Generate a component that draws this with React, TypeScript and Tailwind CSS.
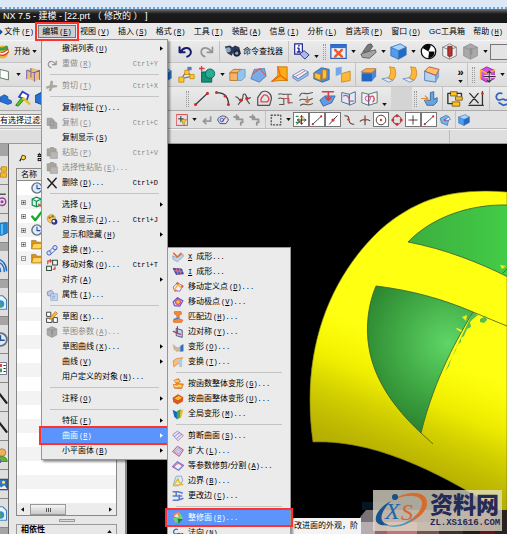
import type { ReactNode } from "react";

const line = { fill: "none", strokeLinecap: "round", strokeLinejoin: "round" } as const;

const icons: Record<string, ReactNode> = {
  logo: <><circle cx="8" cy="10" r="8" fill="#e9b62d" /><path d="M1 7c5 7 10 2 14-3l1 6c-4 6-9 6-14 3z" fill="#d43b25" /><path d="M2 3c3 5 7 4 11 1" stroke="#38a049" strokeWidth="4" {...line} /><path d="M4 11c4 3 7 1 10-2" stroke="#fff" strokeWidth="2" {...line} /></>,
  undo: <path d="M3 5v6h6M4 11C7 5 14 4 16 9c1 3-1 6-4 7" stroke="#171c6c" strokeWidth="2.4" {...line} />,
  redo: <path d="M17 5v6h-6M16 11C13 5 6 4 4 9c-1 3 1 6 4 7" stroke="#949494" strokeWidth="2" {...line} />,
  binoculars: <><path d="M1 4l6-1 3 2 3-2 5 2 2 8-6 3-3-5-2 4-5-3z" fill="#2c3850" /><circle cx="5" cy="8" r="3" fill="#8fa6c8" /><circle cx="15" cy="12" r="4" fill="#1b2232" /><circle cx="15" cy="12" r="1.9" fill="#86a4d5" /></>,
  info: <><path d="M2 1h9v12H2z" fill="#fff" stroke="#1b2390" strokeWidth="1.4" /><path d="M5.5 6h1.5v4M5 10.5h3.5M7 3v.5" stroke="#1b2390" strokeWidth="1.7" {...line} /><path d="M8 13l5-4 6 5-5 5z" fill="#aeb9ea" stroke="#1b2390" /></>,
  fit: <><path d="M1 2h18v16H1z" fill="#e7f0fc" stroke="#2c62b8" strokeWidth="1.5" /><path d="M1 2h18v4H1z" fill="#2e6fd0" /><path d="M6 8l8 8M14 8l-8 8" stroke="#ee5a21" strokeWidth="2.8" {...line} /></>,
  grayPart: <><path d="M3 11l6-9 4-1 2 3-5 7z" fill="#777" stroke="#555" /><path d="M1 13l9-3 8-2 1 3-8 7-8-1z" fill="#a3a3a3" stroke="#555" /></>,
  cube: <><path d="M1 5l11-4 7 4-9 4z" fill="#a7d5ff" /><path d="M1 5l9 4v10l-9-4z" fill="#4f9cf0" /><path d="M10 9l9-4v9l-9 5z" fill="#206bc6" /><path d="M1 5l9 4v10l-9-4V5l11-4 7 4v9l-9 5M10 9l9-4" stroke="#3973b5" {...line} /></>,
  contrast: <><circle cx="10" cy="10" r="8.5" fill="#fff" stroke="#111" strokeWidth="1.5" /><path d="M3 6a8 8 0 018-4c4 1-1 6-1 8h7a8 8 0 01-6 8c-3-1 1-5-1-8z" fill="#080808" /></>,
  redCube: <><path d="M2 5l8-4 8 4v10l-8 4-8-4z" fill="#eee" stroke="#777" /><path d="M2 5l8 3 8-3M10 8v10" stroke="#777" {...line} /><path d="M8 4h5v11l-3 1-2-1z" fill="#b9352d" stroke="#731d1c" /></>,
  grayCube: <><path d="M2 5l8-4 8 4v10l-8 4-8-4z" fill="#a9a9a9" stroke="#8e8e8e" /><path d="M2 5l8 3 8-3M10 8v10" stroke="#8e8e8e" {...line} /><path d="M9 6h3v8H9z" fill="#919191" /></>,
  plane: <path d="M0 2l12 3v12L0 14z" fill="#fff" stroke="#55705b" strokeWidth="1.3" />,
  cage: <><path d="M2 5l6-3 9 3v10l-5 3-10-3z" fill="#e9c176" /><path d="M2 5l9 3 6-3M11 8v10M2 5v10M7 3v10M17 5v11" stroke="#7a62b9" strokeWidth="1.2" {...line} /></>,
  points: <><path d="M4 15l6-9 6 6z" stroke="#4767a4" strokeWidth="1.2" {...line} /><path d="M8 5h5v5H8zM14 10h5v5h-5zM1 13h6v6H1z" fill="#ffc927" stroke="#c78a13" /><path d="M11 1h5v4h-5z" fill="#567cc0" /></>,
  shape: <><path d="M3 7h12v12H3z" fill="#139177" stroke="#05564b" /><circle cx="13" cy="9" r="5.5" fill="#28ad93" stroke="#075f52" /><path d="M3 0v6M0 3h6" stroke="#d33f46" strokeWidth="1.6" {...line} /></>,
  block: <><path d="M1 8l5-4h13v9l-4 4H3z" fill="#8fc4f0" stroke="#6f9cc8" /><path d="M1 8h9v9H1zM1 8l4-4h9l-4 4z" fill="#f7b469" stroke="#ba792e" /></>,
  bluePlane: <><path d="M5 4l12-1 2 9-8 7-10-4z" fill="#78abe7" stroke="#497bbd" /><path d="M3 9l9-6M12 3l5 7" stroke="#dd5b54" strokeWidth="1.4" {...line} /></>,
  fan: <><path d="M8 1h11v16h-7L1 18l7-7z" fill="#ffad17" stroke="#bd7507" /><path d="M8 1l3 10-10 7M11 11l8 6" stroke="#f36912" strokeWidth="1.7" {...line} /></>,
  plate: <><path d="M1 11l12-7 6 3-12 8z" fill="#eff6ff" stroke="#6583ba" /><path d="M1 11v3l6 4 12-7V7l-12 8z" fill="#98bee9" stroke="#6583ba" /><path d="M5 12l10-6" stroke="#d65f66" {...line} /></>,
  combine: <><path d="M1 8l9-6 9 2v12l-8 3-10-4z" fill="#4d8cdd" stroke="#2861a9" /><path d="M2 8l7 2v7l-7-3zM11 4l5 1v9l-5 2z" fill="#ffc13b" stroke="#b87e23" /></>,
  split: <><path d="M2 2l7-1v8l-7 3z" fill="#74a8ed" /><path d="M9 9l10-3v11l-10 2z" fill="#ffb935" stroke="#c38527" /></>,
  edge: <><path d="M2 6l5-3h12v9l-5 6H2z" fill="#4489de" /><path d="M1 7l6-4h12l-5 5z" fill="#ffa63d" stroke="#c77a2b" strokeWidth=".7" /><path d="M2 9h12v9H2z" fill="#2166c1" /></>,
  flange: <><path d="M10 1l6 1c2 6 2 10-2 15l-6-3c4-4 4-8 2-13z" fill="#ffb635" stroke="#c98a2b" /><path d="M1 15l7-1 6 3-5 2z" fill="#dbe9fb" stroke="#7390b7" /></>,
  solid: <><path d="M2 6l13 5v8L2 17z" fill="#b5d4f2" stroke="#4778ac" /><path d="M15 11l4-7v9l-4 6z" fill="#7ba8db" /><path d="M2 6l5-5 12 3-4 7z" fill="#ffc06a" stroke="#b74a3a" /></>,
  moveCube: <><path d="M2 5l7-4 9 4v10l-9 4-7-4z" fill="#d44de1" stroke="#8f279c" /><path d="M2 5l8 4 8-4M2 5v9" stroke="#f9a73a" strokeWidth="2" {...line} /><path d="M12 6v13M6 12.500h13" stroke="#fff" strokeWidth="3" /><path d="M12 6v13M6 12.500h13M12 6l-2 2M12 6l2 2M12 19l-2-2M12 19l2-2" stroke="#303030" strokeWidth="1.4" {...line} /></>,
  stack: <path d="M0 7l7-4 6 3v4l6 3v4l-6 2-13-5z" fill="#2770d2" stroke="#1552ab" strokeWidth="1.3" />,
  tool: <><path d="M6 8l4-6 7 4-2 6z" fill="#fff" stroke="#2c3fc4" strokeWidth="2" /><path d="M2 18l7-9 3 2-7 8z" fill="#5cc41f" stroke="#15711c" /><path d="M11 10l7 6" stroke="#e2c02c" strokeWidth="3" {...line} /></>,
  line: <><path d="M3 17L17 4" stroke="#30343e" strokeWidth="1.5" {...line} /><circle cx="3" cy="17" r="1.8" fill="#d32929" /><circle cx="17" cy="4" r="1.8" fill="#d32929" /></>,
  arc: <><path d="M3 3c9 0 14 5 14 14" stroke="#30343e" strokeWidth="1.5" {...line} /><circle cx="3" cy="3" r="1.8" fill="#d32929" /><circle cx="13" cy="7" r="1.8" fill="#d32929" /><circle cx="17" cy="17" r="1.8" fill="#d32929" /></>,
  spline: <><path d="M1 8c4 0 4 6 7 5 2-1 0-10 4-8 2 2 1 7 6 4M7 13l-3 4M14 12l3 4" stroke="#505050" strokeWidth="1.4" {...line} /><circle cx="7" cy="12" r="2" fill="#d32929" /><circle cx="14" cy="10" r="2" fill="#d32929" /></>,
  offset: <><path d="M2 18V9l4-6c6-4 13 1 12 8l-2 7z" stroke="#505050" strokeWidth="1.4" {...line} /><path d="M6 14v-4l3-4c3-1 7 2 6 6l-2 2z" stroke="#df4755" strokeWidth="1.6" {...line} /></>,
  curveA: <><path d="M2 5c2-2 4 1 7 0h8M2 10c2-2 4 1 6 0v7H3M13 6v9h5" stroke="#5b5b5b" strokeWidth="1.3" {...line} /><path d="M9 10h5v6" stroke="#dd4a5a" strokeWidth="1.4" {...line} /></>,
  curveB: <><path d="M2 7c3-7 6 0 15-4M2 12c5-4 7 3 15-2M3 18c5-4 8 2 14-2" stroke="#5b5b5b" strokeWidth="1.3" {...line} /><path d="M11 8v7M9 13l2 2 2-2" stroke="#df732b" strokeWidth="1.5" {...line} /></>,
  project: <><path d="M1 12l6-5h12l-4 8-10 4z" fill="#629bdf" stroke="#2b65ae" /><path d="M4 2h13M11 3v8M8 9l3 3 3-3" stroke="#d43e4a" strokeWidth="1.8" {...line} /></>,
  sheets: <><path d="M2 3l9 2v12l-9-3zM11 5l7-3v13l-7 3z" fill="#d9ecff" stroke="#485f78" /><path d="M4 7c4-2 7 1 7 6h5" stroke="#dd535b" strokeWidth="1.5" {...line} /></>,
  book: <><path d="M1 3l8 2v13l-8-3zM9 5l10-3v13l-10 3z" fill="#edf3f7" stroke="#4f6263" /><circle cx="8" cy="10" r="3" stroke="#c43c8c" fill="none" /><path d="M11 8c4-3 6 3 3 6" stroke="#e34b58" strokeWidth="1.5" {...line} /></>,
  blueTool: <><path d="M4 12h7V3l4-1v9l4-2v5l-4 4H7z" fill="#6ba2dd" stroke="#2d639d" /><path d="M0 10h8M5 7l3 3-3 3" stroke="#e28b37" strokeWidth="1.3" {...line} /></>,
  link: <><path d="M4 2h8v5H4zM10 8h8v4h-8zM6 14h9v5H6z" fill="#ffc225" stroke="#765b16" /><path d="M4 4H1v12h5M12 4h5v3" stroke="#333" strokeWidth="1.6" {...line} /></>,
  dimension: <><path d="M2 4l10 11M12 4L2 16M17 2v15M1 18h17" stroke="#303030" strokeWidth="1.5" {...line} /><circle cx="17" cy="4" r="1.5" fill="#cf3131" /></>,
  loop: <path d="M9 4C4 2 1 8 4 11s7-3 9 1l5-1v5l-7 2-5-3" stroke="#3263bc" strokeWidth="2" {...line} />,
  filter: <><path d="M1 1h18v18H1z" stroke="#da4449" strokeWidth="1.6" {...line} /><path d="M8 9h10l-4 5v4l-3-2v-3z" fill="#ffc52e" stroke="#a47718" /><path d="M4 8h8M8 4v9" stroke="#333" strokeWidth="1.5" {...line} /></>,
  back: <path d="M16 5v7H4M8 8l-4 4 4 4" stroke="#929c9e" strokeWidth="3" {...line} />,
  scope: <><path d="M1 10c2-9 16-9 18 0l-4 6H5z" fill="#d9e5f5" stroke="#3f5575" strokeWidth="1.6" /><path d="M9 12l5-6" stroke="#e35555" strokeWidth="2" {...line} /><circle cx="8" cy="10" r="3" stroke="#2860c0" strokeWidth="1.5" fill="none" /></>,
  chain: <path d="M2 5h7v4M9 9h7v5h-3v4M6 2v7" stroke="#969696" strokeWidth="3" {...line} />,
  dash: <path d="M2 2h16v16H2z" stroke="#464646" strokeWidth="2" strokeDasharray="2 3.300" {...line} />,
  snap: <><path d="M2 4h3M2 14h3M3 17l4-4" stroke="#258a3b" strokeWidth="2" {...line} /><path d="M11 3v14M4 10h14M9 5l2-2 2 2M9 15l2 2 2-2M6 8l-2 2 2 2M16 8l2 2-2 2" stroke="#333" strokeWidth="1.6" {...line} /><circle cx="13" cy="6" r="2" fill="#e9bf18" /><circle cx="8" cy="13" r="2" fill="#d44" /></>,
  mid: <><path d="M4 17L17 3" stroke="#333" strokeWidth="1.6" {...line} /><circle cx="10" cy="10" r="2.6" fill="#d83437" /></>,
  curvePoint: <><path d="M3 3c8 0 6 3 7 8 1 4 3 6 8 6" stroke="#484848" strokeWidth="1.8" {...line} /><circle cx="9" cy="9" r="2" fill="#e33" /></>,
  cross: <><path d="M10 3v15M2 12c3-3 11-4 16-1" stroke="#4a4542" strokeWidth="1.8" {...line} /><circle cx="10" cy="10" r="2" fill="#d33" /></>,
  center: <><circle cx="10" cy="10" r="8" fill="none" stroke="#333" strokeWidth="1.5" /><circle cx="10" cy="10" r="2" fill="#d33" /></>,
  quadrant: <><circle cx="10" cy="10" r="7" fill="none" stroke="#6a514a" strokeWidth="1.8" /><g fill="#dd292d"><circle cx="10" cy="3" r="2.500" /><circle cx="10" cy="17" r="2.500" /><circle cx="3" cy="10" r="2.500" /><circle cx="17" cy="10" r="2.500" /></g></>,
  plus: <><path d="M10 3v14M3 10h14" stroke="#333" strokeWidth="1.5" {...line} /><path d="M10 9v2" stroke="#d33" strokeWidth="2" /></>,
  facePoint: <><path d="M2 7l10-5 5 3-3 14-10-4z" fill="#6eb6ed" stroke="#315fa3" /><path d="M10 10l6-5 3 4-6 2z" fill="#fff" stroke="#334a98" /><circle cx="10" cy="10" r="2" fill="#d34c68" /></>,
  cut: <path d="M8 1l4 1-1 6 8 1-1 3-7 1-3 6-4-2 3-4-6 2-1-4 6-2z" fill="#aaa79f" />,
  copy: <path d="M2 2h8l3 3v9H2zM7 7h7l4 3v9H7z" fill="#a7a7a7" stroke="#8e8e8e" />,
  paste: <><path d="M2 3h4l1-2h6l1 2h3v12H2z" fill="#aaa59a" stroke="#8f8f8f" /><path d="M7 8h12v11H7z" fill="#b7b7b7" stroke="#989898" /></>,
  delete: <path d="M3 3l14 15M17 2L3 18" stroke="#222" strokeWidth="2.5" {...line} />,
  palette: <><circle cx="9" cy="8" r="7" fill="#f3c85b" stroke="#b18434" /><circle cx="6" cy="6" r="2" fill="#e24132" /><circle cx="11" cy="4" r="2" fill="#3f8c40" /><circle cx="14" cy="13" r="5" fill="#293b8c" /><circle cx="13" cy="12" r="2" fill="#fff" /></>,
  transform: <><path d="M3 14l11-10M7 18l11-10" stroke="#4d6ec8" strokeWidth="1.6" {...line} /><circle cx="5" cy="15" r="3.500" fill="#d6e4fb" stroke="#415ab4" strokeWidth="1.5" /><circle cx="15" cy="6" r="3.500" fill="#d6e4fb" stroke="#415ab4" strokeWidth="1.5" /></>,
  move: <><path d="M1 12h8v7H1zM11 2h8v8h-8z" fill="#eef4ef" stroke="#2c4c3c" strokeWidth="1.7" /><path d="M3 8V3h5M7 1l2 2-2 2M15 13v4h-3" stroke="#e03d31" strokeWidth="2" {...line} /></>,
  props: <><path d="M2 5l7-3 4 5-4 5-6-1z" fill="#c0caee" stroke="#626dac" /><path d="M8 8h11v11H8z" fill="#c9d8f4" stroke="#7f94c2" /><path d="M10 12h6M10 15h5" stroke="#6d8dc1" /></>,
  sketch: <><path d="M1 2h7v7H1zM1 12h9v7H1zM12 11h7v8h-7z" fill="#fff" stroke="#333" strokeWidth="1.5" /><path d="M7 11L16 1l3 3-9 9-4 1z" fill="#ffc51b" stroke="#9b5a1d" /></>,
  form: <><path d="M1 8l7 3 10-6 1 4-10 9-7-4z" fill="#b5d9ec" stroke="#7a8ea0" /><path d="M3 4l6 6 6-6" stroke="#e6643c" strokeWidth="2.6" {...line} /></>,
  mesh: <><path d="M2 4l14 1 3 8-12 1z" fill="#4e56b9" stroke="#29459f" strokeWidth="1.5" /><path d="M4 8l13 1M7 4l3 10M12 4l3 10" stroke="#df7180" strokeWidth="1.8" {...line} /></>,
  pole: <><path d="M2 10l7-7 9 5-5 9-9-1z" fill="#eff0ff" stroke="#9b60bb" strokeWidth="1.5" /><path d="M5 13l5-7 5 5" stroke="#efc22b" strokeWidth="2.5" {...line} /><circle cx="9" cy="4" r="2" fill="#d55" /><circle cx="17" cy="9" r="2" fill="#d55" /><circle cx="6" cy="16" r="2" fill="#d75" /></>,
  poleV: <><path d="M2 10l7-7 9 5-5 9-9-1z" fill="#e8d8ff" stroke="#6b4cce" strokeWidth="2" /><circle cx="10" cy="10" r="4" fill="#efce35" stroke="#d45082" strokeWidth="2" /></>,
  match: <><path d="M4 1h11l1 4-4 2v6l6 2-2 4H3l-1-4 6-3V7L4 5z" fill="#f18b38" stroke="#d65828" /><path d="M3 14l9-2" stroke="#497ecb" strokeWidth="2" /></>,
  mirror: <><path d="M7 4l10 3v12L7 16z" fill="#bed8f4" stroke="#414b70" strokeWidth="1.5" /><path d="M2 9l12 5M9 1v10" stroke="#ac3f5b" strokeWidth="2" {...line} /></>,
  deform: <><path d="M1 5l8 6 10-4v10L7 18z" fill="#9dbce3" /><path d="M1 5l5 7 5-1v6L3 15z" fill="#ddb678" /><path d="M14 8l5-3v12l-5 1z" fill="#3470bd" /></>,
  warp: <><path d="M2 8l6-4 10-1-3 4v11l-4-6-8 6z" fill="#ffbd70" stroke="#c97429" /><path d="M10 7l7-2v12l-5 1z" fill="#a9ccef" /></>,
  function: <><path d="M3 4l8-3 3 5-5 3 10 1-3 8-12-1-2-6 6-1z" fill="#f69a27" stroke="#d75a22" /><path d="M4 13c5 4 8-3 11 1M5 5l6 0" stroke="#fff1a0" strokeWidth="2" {...line} /></>,
  surface: <><path d="M1 8l9-6 9 5-1 7-9 5-7-4z" fill="#dd5822" /><path d="M3 9l8-5 7 4-8 5z" fill="#ffb92d" stroke="#b94917" /></>,
  global: <><path d="M1 3l8 4v12L4 15z" fill="#1c62c4" /><path d="M8 5l7-3-1 14-6 3z" fill="#42a752" /><path d="M14 4l5-2-3 12-3 4z" fill="#ebbd28" /></>,
  snip: <><path d="M1 8l8-6 10 7-9 9z" fill="#e2e4f8" stroke="#b77aa4" strokeWidth="1.5" /><path d="M4 11l9-7M8 14l8-7" stroke="#8289c9" strokeWidth="1.5" {...line} /></>,
  enlarge: <><path d="M1 11l8-9 10 6-7 11z" fill="#e3cfe6" stroke="#a3498e" strokeWidth="1.5" /><path d="M4 11l7-6 5 4-5 6z" fill="#c2cdec" stroke="#e1796f" /></>,
  trim: <><path d="M1 11l8-8 10 6-8 8z" fill="#eceefb" stroke="#7d74c9" strokeWidth="2" /><path d="M4 11c4-7 9-6 12-2" stroke="#d46a8c" strokeWidth="1.7" {...line} /></>,
  boundary: <><path d="M7 2h9l2 8-7 8H2l2-8z" fill="#d8ebff" stroke="#5484c6" /><path d="M3 17l7-11 2 6 6 4z" stroke="#e6bc28" strokeWidth="2.3" {...line} /></>,
  change: <path d="M2 3h8l7 2M2 10h14M2 17h7l9-3M7 4v6M12 9v7" stroke="#5c7bd0" strokeWidth="2.6" {...line} />,
  sphere: <><circle cx="9" cy="9" r="8" fill="#bd54d4" /><path d="M2 6a8 8 0 0112-4L9 10z" fill="#ff8757" /><path d="M1 9l8 1 5-8 4 8-3 5-9 3z" fill="#66dd6d" /><path d="M3 8l6-5 2 6z" fill="#fff" opacity=".8" /><path d="M9 11l9 1-7 7z" fill="#267b40" /></>,
  clock: <><circle cx="10" cy="10" r="8.500" fill="#dcecff" stroke="#6b717c" strokeWidth="2.4" /><path d="M10 5v6h5" stroke="#27518e" strokeWidth="1.8" {...line} /></>,
  axis: <><path d="M2 5l7-3 8 3v10l-8 3-7-3zM2 5l7 4 8-4M9 9v9" fill="#dff5e7" stroke="#168e59" strokeWidth="2" /><path d="M12 14l7 4" stroke="#da4b37" strokeWidth="3" /></>,
  check: <path d="M2 11l5 6L18 3" stroke="#18a92b" strokeWidth="4" {...line} />,
  folder: <><path d="M1 4h7l2 3h8v11H1z" fill="#d9951b" stroke="#906817" /><path d="M4 9h16l-4 9H1z" fill="#ffd55a" stroke="#a97112" /></>,
  nodes: <><path d="M3 4v11h10M3 8h9" stroke="#555" {...line} /><path d="M0 1h6v6H0zM11 5h7v6h-7zM10 13h8v6h-8z" fill="#f6ba25" stroke="#ba8011" /></>,
  constraint: <><path d="M5 3h12" stroke="#555" strokeWidth="2" /><circle cx="12" cy="13" r="5" stroke="#9b3e9d" strokeWidth="2" fill="none" /><circle cx="12" cy="13" r="2" fill="#9b3e9d" /></>,
  books: <><path d="M1 6l6-3 12-1v14l-7 3H1z" fill="#2387d9" stroke="#125b9b" /><path d="M7 5v13M12 4v14" stroke="#76d0ed" strokeWidth="2" /></>,
  radio: <><circle cx="4" cy="16" r="3" fill="#246cc9" /><path d="M2 10c5 0 8 3 8 8M2 5c8 0 13 5 13 13M3 1c9 0 15 7 15 16" stroke="#246cc9" strokeWidth="2" {...line} /></>,
  page: <><path d="M2 1h11l5 5v13H2z" fill="#e8f5ff" stroke="#4587b4" strokeWidth="1.5" /><circle cx="10" cy="12" r="5" fill="#3b8dca" /><path d="M8 8l4 5-3 3z" fill="#45ad51" /></>,
  list: <><path d="M1 2h17v16H1z" fill="#fff" stroke="#557" /><path d="M14 6h3M14 10h3M14 14h3" stroke="#333" strokeWidth="1.5" /><path d="M8 4h4v4H8z" fill="#d44" /><path d="M8 10h4v5H8z" fill="#3a9f54" /></>,
  wand: <path d="M7 3l11 14M7 8l3-1" stroke="#222" strokeWidth="3" {...line} />,
  user: <><circle cx="12" cy="6" r="5" fill="#eeb15e" stroke="#a96b2d" /><path d="M4 18c0-9 15-9 15 0z" fill="#65b52b" stroke="#377c20" /><circle cx="8" cy="18" r="3" fill="#6354ba" /></>,
  photo: <><path d="M1 3h18v14H1z" fill="#3377c4" stroke="#243d65" strokeWidth="1.5" /><circle cx="14" cy="7" r="2" fill="#fff05a" /><path d="M2 16l5-5 4 3 4-3 4 5z" fill="#eee" /></>,
  pin: <><path d="M8 3l8 2v7l-6 3-5-4z" fill="#ffd747" stroke="#222" strokeWidth="2" /><path d="M5 12l-3 6" stroke="#111" strokeWidth="3" /></>,
};

function Icon({ name, className = "size-[17px]" }: { name: string; className?: string }) {
  return <svg viewBox="0 0 20 20" className={`shrink-0 ${className}`} aria-hidden="true">{icons[name]}</svg>;
}

function Latin({ children, className = "" }: { children: ReactNode; className?: string }) {
  return <span className={`font-['Liberation_Mono',monospace] text-[7px] ${className}`}>{children}</span>;
}

function Label({ text, k, dots, lead }: { text: string; k?: string; dots?: boolean; lead?: string }) {
  return (
    <span className="whitespace-nowrap">
      {lead && <Latin className="mr-1 underline">{lead}</Latin>}
      {text}
      {k && <Latin className="ml-px">(<u>{k}</u>)</Latin>}
      {dots && <Latin>...</Latin>}
    </span>
  );
}

function Arrow({ low }: { low?: boolean }) {
  return (
    <span className={`flex w-[9px] shrink-0 justify-center ${low ? "self-end pb-1" : ""}`}>
      <svg viewBox="0 0 6 4" className="h-[3px] w-[5px]"><path d="M0 0h6L3 4z" fill="#111" /></svg>
    </span>
  );
}

function Sep() {
  return <span className="flex h-full w-[5px] shrink-0 justify-center"><i className="h-full w-px bg-[#c2c2c2]" /></span>;
}

function Handle() {
  return <span className="mx-0.5 h-4 w-[3px] shrink-0 border-x border-dotted border-[#999]" />;
}

/* Entries: an icon name, "v" drop-down arrow, "_" low arrow, "|" separator, ":" grip */
function Tools({ items }: { items: string[] }) {
  return items.map((n, i) => {
    if (n === "v") return <Arrow key={i} />;
    if (n === "_") return <Arrow key={i} low />;
    if (n === "|") return <Sep key={i} />;
    if (n === ":") return <Handle key={i} />;
    return (
      <button key={i} aria-label={n} className="flex w-[21px] shrink-0 items-center justify-center">
        <Icon name={n} />
      </button>
    );
  });
}

const menus = [
  ["文件", "F"], ["编辑", "E"], ["视图", "V"], ["插入", "S"], ["格式", "R"], ["工具", "T"], ["装配", "A"],
  ["信息", "I"], ["分析", "L"], ["首选项", "P"], ["窗口", "O"], ["GC工具箱", ""], ["帮助", "H"],
];

type Item = { t: string; lead?: string; k?: string; dots?: boolean; cut?: string; sub?: boolean; off?: boolean; icon?: string; on?: boolean } | null;

const editMenu: Item[] = [
  { t: "撤消列表", k: "U", sub: true },
  { t: "重做", k: "R", cut: "Ctrl+Y", off: true, icon: "redo" },
  null,
  { t: "剪切", k: "T", cut: "Ctrl+X", off: true, icon: "cut" },
  null,
  { t: "复制特征", k: "Y", dots: true },
  { t: "复制", k: "C", cut: "Ctrl+C", off: true, icon: "copy" },
  { t: "复制显示", k: "S" },
  { t: "粘贴", k: "P", cut: "Ctrl+V", off: true, icon: "paste" },
  { t: "选择性粘贴", k: "E", dots: true, off: true, icon: "paste" },
  { t: "删除", k: "D", dots: true, cut: "Ctrl+D", icon: "delete" },
  null,
  { t: "选择", k: "L", sub: true },
  { t: "对象显示", k: "J", dots: true, cut: "Ctrl+J", icon: "palette" },
  { t: "显示和隐藏", k: "H", sub: true },
  { t: "变换", k: "M", dots: true, icon: "transform" },
  { t: "移动对象", k: "O", dots: true, cut: "Ctrl+T", icon: "move" },
  { t: "对齐", k: "A", sub: true },
  { t: "属性", k: "I", dots: true, icon: "props" },
  null,
  { t: "草图", k: "K", dots: true, icon: "sketch" },
  { t: "草图参数", k: "A", dots: true, off: true, icon: "grayCube" },
  { t: "草图曲线", k: "X", dots: true, sub: true },
  { t: "曲线", k: "V", sub: true },
  { t: "用户定义的对象", k: "N", dots: true },
  null,
  { t: "注释", k: "O", sub: true },
  null,
  { t: "特征", k: "F", sub: true },
  { t: "曲面", k: "R", sub: true, on: true },
  { t: "小平面体", k: "B", sub: true },
];

const faceMenu: Item[] = [
  { t: "成形", lead: "X", dots: true, icon: "form" },
  { t: "成形", lead: "I", dots: true, icon: "mesh" },
  { t: "移动定义点", k: "D", dots: true, icon: "pole" },
  { t: "移动极点", k: "V", dots: true, icon: "poleV" },
  { t: "匹配边", k: "H", dots: true, icon: "match" },
  { t: "边对称", k: "Y", dots: true, icon: "mirror" },
  { t: "变形", k: "O", dots: true, icon: "deform" },
  { t: "变换", k: "T", dots: true, icon: "warp" },
  null,
  { t: "按函数整体变形", k: "G", dots: true, icon: "function" },
  { t: "按曲面整体变形", k: "U", dots: true, icon: "surface" },
  { t: "全局变形", k: "M", dots: true, icon: "global" },
  null,
  { t: "剪断曲面", k: "S", dots: true, icon: "snip" },
  { t: "扩大", k: "L", dots: true, icon: "enlarge" },
  { t: "等参数修剪/分割", k: "A", dots: true, icon: "trim" },
  { t: "边界", k: "B", dots: true, icon: "boundary" },
  { t: "更改边", k: "C", dots: true, icon: "change" },
  null,
  { t: "整修面", k: "R", dots: true, icon: "sphere", on: true },
  { t: "法向", k: "N", icon: "loop" },
];

function Menu({ items, className }: { items: Item[]; className: string }) {
  return (
    <div role="menu" className={`absolute border border-[#969696] bg-[#ebebeb] py-px shadow-[2px_2px_2px_rgba(0,0,0,0.4)] ${className}`}>
      {items.map((it, i) =>
        it === null ? (
          <div key={i} className="flex h-[7px] items-center px-2"><hr className="w-full border-[#c4c4c4]" /></div>
        ) : (
          <div key={i} className="relative">
            <button
              role="menuitem"
              disabled={it.off}
              className={`flex h-[15px] w-full items-center text-left ${it.off ? "text-[#8b8b8b]" : it.on ? "bg-[#5b95fb] text-white" : "text-black"}`}
            >
              <span className="flex w-5 shrink-0 justify-center">{it.icon && <Icon name={it.icon} className="size-3" />}</span>
              <Label text={it.t} k={it.k} dots={it.dots} lead={it.lead} />
              <span className="flex-1" />
              {it.cut && <span className="pr-[9px]"><Latin>{it.cut}</Latin></span>}
              {it.sub && (
                <svg viewBox="0 0 4 6" className="mr-1 h-[5px] w-[3px]"><path d="M0 0l4 3-4 3z" fill="currentColor" /></svg>
              )}
            </button>
            {it.on && <span className="pointer-events-none absolute -inset-x-[3px] -inset-y-0.5 z-30 border-2 border-[#ff3030]" />}
          </div>
        ),
      )}
    </div>
  );
}

const tabs = ["nodes", "constraint", "books", "radio", "page", "clock", "list", "wand", "wand", "user", "photo", "page"];
const tree = [["", "clock"], ["+", "axis"], ["+", "check"], ["+", "clock"], ["+", "folder"], ["-", "folder"]];
const snaps: [string, boolean][] = [
  ["snap", true], ["line", true], ["mid", true], ["curvePoint", false], ["cross", false],
  ["center", true], ["quadrant", false], ["plus", true], ["line", true], ["facePoint", false],
];

const dome = "M313 442C300 350 330 277 380 230C418 197 455 188 507 192V515C455 482 382 439 313 442z";

function Model() {
  return (
    <svg viewBox="127 144 380 390" preserveAspectRatio="xMaxYMin slice" className="block h-full w-full" aria-hidden="true">
      <defs>
        <linearGradient id="body" gradientUnits="userSpaceOnUse" x1="470" y1="370" x2="425" y2="475">
          <stop offset="0" stopColor="#ffff12" /><stop offset=".4" stopColor="#f8f800" /><stop offset="1" stopColor="#b4b000" />
        </linearGradient>
        <linearGradient id="side" gradientUnits="userSpaceOnUse" x1="320" y1="440" x2="365" y2="320">
          <stop offset="0" stopColor="#b4ae00" stopOpacity=".9" /><stop offset=".4" stopColor="#d0cb00" stopOpacity=".6" /><stop offset="1" stopColor="#ffff00" stopOpacity="0" />
        </linearGradient>
        <radialGradient id="leaf" gradientUnits="userSpaceOnUse" cx="448" cy="343" r="95">
          <stop offset="0" stopColor="#5fd667" /><stop offset=".5" stopColor="#42ac46" /><stop offset="1" stopColor="#2a822e" />
        </radialGradient>
        <linearGradient id="leafTop" x1="0" y1="0" x2="1" y2="0">
          <stop offset="0" stopColor="#3cae3e" /><stop offset="1" stopColor="#43cc47" />
        </linearGradient>
      </defs>
      <path d={dome} fill="url(#body)" />
      <path d={dome} fill="url(#side)" stroke="#76702a" strokeWidth=".6" />
      <path d="M408 242C432 217 470 204 508 205V277C480 263 445 249 408 242z" fill="url(#leafTop)" stroke="#345b35" strokeWidth=".8" />
      <path d="M473 312l5 3-5 4-3 3 1 5-4 2-3 7-3 2 0 4-4 3-1 5-4 7-3 9-4 6z" fill="#50bf52" />
      <path d="M376 286C410 290 443 299 473 312C459 336 435 376 421 433C392 406 374 378 369 348C365 325 369 302 376 286z" fill="url(#leaf)" stroke="#345b35" strokeWidth=".8" />
      <path d="M473 312C485 317 497 322 507 326M421 433l12 11M503 273l4-4" fill="none" stroke="#4e521e" strokeWidth=".8" />
      <path d="M480 319l6-3 1 4-3 3-4-1z" fill="#50bf52" />
      <path d="M462 317l5-2-1 6zM457 328l5 2-1 2-5-3zM500 265l6 1-4 3z" fill="#f1ee18" />
      <path d="M362 502h36v8h-36z" fill="#071520" />
      <path d="M361 516l5-6h15v12h-24z" fill="#767276" /><path d="M357 522h18v12h-18z" fill="#b7adb0" />
      <path d="M375 522h12v12h-12z" fill="#96666a" /><path d="M387 522h30v12h-30z" fill="#b97879" /><path d="M417 522h22v12h-22z" fill="#765454" />
      <path d="M439 522h24v12h-24z" fill="#3c3030" /><path d="M463 522h17v12h-17z" fill="#271c1b" /><path d="M480 522h15v12h-15z" fill="#571b19" /><path d="M495 510h12v24h-12z" fill="#2a2220" />
      <path d="M380 510h115v12h-115z" fill="#4b393a" />
    </svg>
  );
}

function Watermark() {
  return (
    <div className="absolute right-[5px] bottom-[3px] flex h-[41px] w-[129px] items-center bg-[#e4dfce]/75">
      <svg viewBox="0 0 57 41" className="h-[41px] w-[57px] shrink-0" aria-hidden="true">
        <path d="M16 35C-3 38-1 21 18 11C9 20 3 32 16 35z" fill="#17538f" />
        <path d="M18 11C33 0 55 0 54 14C53 24 39 34 25 36C41 30 50 20 49 12C47 4 32 4 18 11z" fill="#d66b2b" />
        <path d="M10 34c14 5 29-3 35-10-7 12-26 16-35 10z" fill="#419acb" />
        <circle cx="22" cy="7" r="3" fill="#164f8c" />
        <text x="12" y="29" fontSize="24" fontStyle="italic" fontFamily="Liberation Serif, serif" fill="#1e66ab">X</text>
        <text x="28" y="30" fontSize="24" fontStyle="italic" fontFamily="Liberation Serif, serif" fill="#d5662c">S</text>
      </svg>
      <div className="text-[#252a56]">
        <p className="text-[23px] leading-[25px] font-black">资料网</p>
        <p className="font-['Liberation_Mono',monospace] text-[9px] leading-[11px] font-bold">ZL.XS1616.COM</p>
      </div>
    </div>
  );
}

export default function App() {
  return (
    <div className="relative flex h-screen flex-col overflow-hidden bg-[#dedede] font-['Liberation_Sans','Noto_Sans_CJK_SC',sans-serif] text-[8px] leading-none text-black">
      <div className="h-[9px] shrink-0 border-b-2 border-dotted border-[#68a9e2] bg-[#dce8f5]" />
      <header className="flex h-[14px] shrink-0 items-center bg-linear-to-b from-[#777] via-[#1b1b1b] via-35% to-[#171717] pl-[3px] text-[9px] whitespace-pre text-white">
        NX 7.5 - 建模 - [22.prt （ 修改的 ） ]
      </header>
      <nav className="flex h-[17px] shrink-0 items-center justify-between bg-[#e9e9e9] pr-1">
        <span className="-ml-0.5 -mr-1.5 size-1 rotate-45 bg-[#174d9c]" />
        {menus.map(([t, k]) =>
          t === "编辑" ? (
            <button key={t} className="relative -mx-1 h-[13px] border border-[#777] bg-[#cfcfcf] px-[3px]">
              <Label text={t} k={k} />
              <span className="pointer-events-none absolute -inset-1 z-30 border-2 border-[#ff3030]" />
            </button>
          ) : (
            <button key={t}><Label text={t} k={k} /></button>
          ),
        )}
      </nav>

      <div className="flex h-[23px] shrink-0 items-center border-y border-t-[#f6f6f6] border-b-[#c4c4c4] bg-linear-to-b from-[#ebebeb] to-[#dcdcdc]">
        <div className="flex w-[175px] shrink-0 items-center">
          <Icon name="logo" className="-ml-1 size-4" /><span className="pl-0.5">开始</span><Arrow />
        </div>
        <Tools items={["undo", "redo", "|", "binoculars"]} />
        <button className="w-[43px] shrink-0 text-left whitespace-nowrap">命令查找器</button>
        <Tools items={["|", "info", "_", ":", "fit", "v", "grayPart", "v", "cube", "v", "contrast", "redCube", "grayCube", "v"]} />
        <span className="h-4 flex-1 border border-r-0 border-[#777] bg-[#e4e4e4]" />
      </div>

      <div className="flex h-6 shrink-0 items-center border-b border-[#c4c4c4] bg-linear-to-b from-[#ebebeb] to-[#dcdcdc]">
        <div className="flex w-[176px] shrink-0 items-center">
          <Icon name="plane" className="size-[14px]" /><Arrow /><Tools items={["cage"]} />
          <span className="flex-1" /><Icon name="cube" className="mr-1 size-4" />
        </div>
        <Tools items={["points", "shape", "v", "block", "bluePlane", "fan", "plate", "combine", "split", "|", "edge", "flange", "flange", "solid"]} />
        <span className="flex-1" />
        <span className="flex flex-col items-center gap-0.5 text-[11px] font-bold">»<Arrow /></span>
        <Sep />
        <Tools items={[":", "moveCube", "v"]} />
      </div>

      <div className="flex h-6 shrink-0 items-center border-b border-[#aaa] bg-[#d4d4d4]">
        <div className="flex h-full w-[391px] shrink-0 items-center bg-linear-to-b from-[#ebebeb] to-[#dcdcdc]">
          <div className="flex w-[184px] shrink-0 items-center">
            <Icon name="stack" className="size-3" /><Tools items={["tool", "stack"]} />
          </div>
          <Tools items={[":", "line", "arc", "spline", "offset", "curveA", "curveB", "project", "sheets", "book", "_"]} />
        </div>
        <span className="min-w-0 flex-1" />
        <div className="flex h-full w-[95px] shrink-0 items-center overflow-hidden bg-linear-to-b from-[#ebebeb] to-[#dcdcdc]">
          <Tools items={[":", "blueTool", "|", "link", "dimension", "|", "loop"]} />
        </div>
      </div>

      <div className="flex h-[18px] shrink-0 items-center border-b border-[#bbb] bg-[#e2e2e2]">
        <div className="w-[174px] shrink-0">
          <input aria-label="选择过滤器" defaultValue="有选择过滤器" className="block h-3 w-16 border-y border-[#888] bg-white" />
        </div>
        <button aria-label="filter" className="flex w-4 shrink-0 justify-center"><Icon name="filter" className="size-3" /></button>
        <Arrow />
        {["back", "scope", "chain", "chain"].map((n, i) => (
          <button key={i} aria-label={n} className="flex w-4 shrink-0 justify-center"><Icon name={n} className="size-3" /></button>
        ))}
        <Sep />
        <button aria-label="dash" className="flex w-4 shrink-0 justify-center"><Icon name="dash" className="size-3" /></button>
        <Arrow />
        {snaps.map(([n, boxed], i) => (
          <button key={i} aria-label={n} className={`flex h-[15px] w-4 shrink-0 items-center justify-center border ${boxed ? "border-[#777] bg-white" : "border-transparent"}`}>
            <Icon name={n} className="size-3" />
          </button>
        ))}
        <Sep />
        <button aria-label="cube"><Icon name="cube" className="size-3" /></button>
      </div>
      <div className="flex h-[15px] shrink-0 border-t border-[#f5f5f5] border-b border-b-[#999] bg-[#dedede]">
        <span className="ml-auto w-[58px] border-l border-[#bbb]" />
      </div>

      <main className="flex min-h-0 flex-1">
        <aside className="flex w-[9px] shrink-0 flex-col overflow-hidden border-r border-[#666] bg-[#a5a5a5] pt-3">
          {tabs.map((n, i) => (
            <button key={i} aria-label={n} className={`flex h-[29px] shrink-0 items-center justify-end border-b border-[#888] bg-[#dfdfdf] ${i > 1 && i < 5 ? "mb-2" : ""}`}>
              <Icon name={n} className="size-[15px]" />
            </button>
          ))}
        </aside>
        <section className="flex w-[118px] shrink-0 flex-col border-r-2 border-[#888] bg-[#e7e7e7] pr-2 pl-[7px]">
          <div className="flex h-6 shrink-0 items-center gap-2.5 pt-1 pl-[3px] font-bold">
            <Icon name="pin" className="size-2" />部件导航器
          </div>
          <div className="flex min-h-0 flex-1 flex-col border border-[#888] bg-white">
            <div className="flex h-3 shrink-0 items-center border-b border-[#888] bg-[#e5e5e5] pl-1">名称</div>
            <ul className="min-h-0 flex-1 overflow-hidden">
              {Array.from({ length: 24 }, (_, i) => (
                <li key={i} className="flex h-[14px] items-center gap-[5px] pl-1 even:bg-[#f3f3f3]">
                  {tree[i] && (
                    <>
                      <span className={`flex size-[5px] items-center justify-center text-[6px] ${tree[i][0] ? "border border-[#999]" : ""}`}>{tree[i][0]}</span>
                      <Icon name={tree[i][1]} className="size-3" />
                    </>
                  )}
                </li>
              ))}
            </ul>
            <div className="flex h-3 shrink-0 items-center border-t border-[#eee] bg-[#ececec] px-1">
              <svg viewBox="0 0 4 6" className="h-[5px] w-[3px]"><path d="M4 0L0 3l4 3z" fill="#111" /></svg>
              <span className="ml-1.5 flex h-[11px] w-9 items-center justify-center gap-px border border-[#999] bg-linear-to-b from-[#f5f5f5] to-[#c9c9c9]">
                <i className="h-1 w-px bg-[#555]" /><i className="h-1 w-px bg-[#555]" /><i className="h-1 w-px bg-[#555]" />
              </span>
              <svg viewBox="0 0 4 6" className="ml-auto h-[5px] w-[3px]"><path d="M0 0l4 3-4 3z" fill="#111" /></svg>
            </div>
          </div>
          <div className="flex h-2 shrink-0 items-center justify-center"><span className="h-[3px] w-4 border border-[#999] bg-[#ddd]" /></div>
          <div className="flex h-[10px] shrink-0 items-start justify-between border-x border-t border-[#999] px-1 pt-px font-bold">
            <span>相依性</span>
            <svg viewBox="0 0 6 4" className="mt-1 h-[3px] w-[5px]"><path d="M0 4h6L3 0z" fill="#111" /></svg>
          </div>
        </section>
        <section className="relative min-w-0 flex-1 overflow-hidden bg-black">
          <Model />
          <p className="absolute bottom-0 left-[164px] flex h-4 w-[70px] items-center rounded-tl-sm bg-[#f3f3f3] pl-[3px] whitespace-nowrap">改进面的外观，阶</p>
          <Watermark />
        </section>
      </main>

      <Menu items={editMenu} className="top-[39px] left-[41px] z-10 w-[127px]" />
      <Menu items={faceMenu} className="top-[247px] left-[167px] z-20 w-[124px]" />
    </div>
  );
}
